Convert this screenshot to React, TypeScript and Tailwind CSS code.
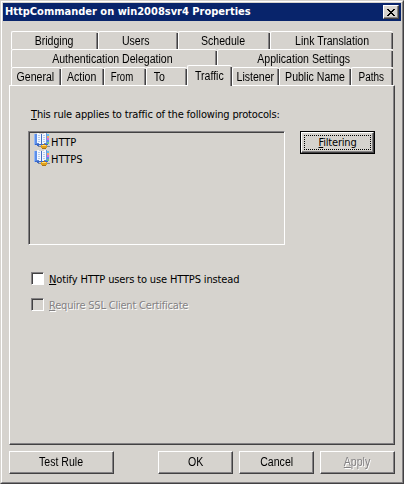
import React from "react";

const UI = "font-['DejaVu_Sans_Condensed','DejaVu_Sans',sans-serif] [font-stretch:condensed]";
const RAISED =
  "border border-t-white border-l-white border-r-[#424142] border-b-[#424142] shadow-[inset_-1px_-1px_0_#848284]";

function Tab({ label, box, text = "scale-x-[0.88]" }: { label: string; box: string; text?: string }) {
  return (
    <div
      className={`${box} relative flex h-[18px] shrink-0 justify-center rounded-t-[2px] border-t border-l border-white text-[12px] leading-[19px]`}
    >
      <span className={text}>{label}</span>
      <i className="absolute top-px right-0 bottom-0 w-[2px] border-r border-l border-r-[#424142] border-l-[#848284]" />
    </div>
  );
}

function Button({ children, box, text = "" }: { children: React.ReactNode; box: string; text?: string }) {
  return (
    <button className={`${box} ${RAISED} flex h-[23px] shrink-0 justify-center pt-[3px] text-[12px] leading-[15px]`}>
      <span className={`scale-x-[0.88] ${text}`}>{children}</span>
    </button>
  );
}

function ProtocolIcon() {
  return (
    <svg width="16" height="16" viewBox="0 0 16 16" shapeRendering="crispEdges" className="shrink-0">
      <path d="M0 1h3v11H0z" fill="#5b8eea" />
      <path d="M0 1h1v11H0z" fill="#94b8f5" />
      <path d="M1 11h13v1H1zM3 12h4v1H3z" fill="#3967c8" />
      <path d="M3 0h2v1h2v10H5v-1H3z" fill="#f2f7fe" />
      <path d="M8 1h2V0h2v10h-2v1H8z" fill="#f2f7fe" />
      <path d="M12 0h1v11h-1z" fill="#6b96df" />
      <path d="M7 1h1v11H7z" fill="#426fc2" />
      <path d="M2 10h3v1H2zM10 10h4v1h-4z" fill="#5a86d6" />
      <path d="M4 2h2v1H4zM4 4h2v1H4zM4 6h2v1H4zM4 8h2v1H4zM9 2h2v1H9zM9 4h2v1H9zM9 6h2v1H9zM9 8h2v1H9z" fill="#b5caea" />
      <path d="M13 1h2v2h-2z" fill="#5fc0ee" />
      <path d="M13 3h2v2h-2z" fill="#f5a469" />
      <path d="M13 5h2v2h-2z" fill="#d86be0" />
      <path d="M13 7h2v2h-2z" fill="#5a8cf0" />
      <path d="M13 9h2v2h-2z" fill="#63c78c" />
      <path d="M4 13h12v1H4z" fill="#848a94" />
      <path d="M5 12h2v1H5zM13 12h2v1h-2z" fill="#c5cad2" />
      <path d="M9 11h2v1H9z" fill="#b5790f" />
      <path d="M7 12h6v3H7z" fill="#e0a01c" />
      <path d="M8 12h4v1H8z" fill="#ffdc70" />
      <path d="M8 15h4v1H8z" fill="#a87416" />
    </svg>
  );
}

function CheckBox({ label, disabled = false, text }: { label: string; disabled?: boolean; text: string }) {
  return (
    <label className="flex h-[13px] items-center">
      <span
        className={`size-[13px] shrink-0 border border-t-[#848284] border-l-[#848284] border-r-white border-b-white shadow-[inset_1px_1px_0_#424142] ${disabled ? "" : "bg-white"}`}
      />
      <span
        className={`mt-[2px] ml-[5px] text-[11px] leading-[13px] ${text} ${disabled ? "text-[#848284] [text-shadow:1px_1px_0_#fff]" : ""}`}
      >
        <u className="underline-offset-1">{label[0]}</u>
        {label.slice(1)}
      </span>
    </label>
  );
}

export default function App() {
  return (
    <div className="h-[484px] w-[404px] overflow-hidden border border-t-[#d6d3ce] border-r-[#424142] border-b-[#424142] border-l-[#d6d3ce] bg-[#d6d3ce] font-['Liberation_Sans',Arial,sans-serif] whitespace-nowrap text-black">
      <div className="h-full border border-t-white border-r-[#848284] border-b-[#848284] border-l-white pt-px pl-px">
        <header className="flex h-[18px] w-[398px] items-center justify-between bg-[#08246b] pr-[2px] pl-[2px]">
          <h1 className={`${UI} text-[11px] leading-[18px] font-bold text-white`}>
            HttpCommander on win2008svr4 Properties
          </h1>
          <button aria-label="Close" className={`${RAISED} flex h-[14px] w-[16px] items-center justify-center bg-[#d6d3ce]`}>
            <svg width="8" height="7" viewBox="0 0 8 7" shapeRendering="crispEdges">
              <path d="M0 0h2v1h1v1h2V1h1V0h2v1H7v1H6v1H5v1h1v1h1v1h1v1H6V6H5V5H3v1H2v1H0V6h1V5h1V4h1V3H2V2H1V1H0z" />
            </svg>
          </button>
        </header>

        <nav className="mt-[10px] ml-[8px] w-[382px]">
          <div className="flex">
            <Tab label="Bridging" box="w-[87px] pr-[2px]" />
            <Tab label="Users" box="w-[80px] pr-[6px]" />
            <Tab label="Schedule" box="w-[92px] pr-[2px]" />
            <Tab label="Link Translation" box="w-[123px]" />
          </div>
          <div className="flex">
            <Tab label="Authentication Delegation" box="w-[206px] pr-[4px]" />
            <Tab label="Application Settings" box="w-[176px] pr-[3px]" />
          </div>
          <div className="flex">
            <Tab label="General" box="w-[50px] pr-[2px]" />
            <Tab label="Action" box="w-[43px] pr-[3px]" />
            <Tab label="From" box="w-[42px] pr-[7px]" text="scale-x-[0.8]" />
            <Tab label="To" box="w-[41px] pr-[16px]" />
            <Tab label="Traffic" box="w-[45px] z-10 -mt-[2px] h-[21px]! pt-[1px] pr-[2px] bg-[#d6d3ce]" />
            <Tab label="Listener" box="w-[47px] pr-[2px]" />
            <Tab label="Public Name" box="w-[72px]" />
            <Tab label="Paths" box="w-[42px] pr-[3px]" text="scale-x-[0.83]" />
          </div>
        </nav>

        <main className={`${RAISED} ${UI} -mt-px ml-[6px] h-[360px] w-[386px] pt-[21px] pl-[18px] text-[11px]`}>
          <p className="ml-[3px] h-[14px] leading-[15px] tracking-[-0.17px]">
            <u className="underline-offset-1">T</u>his rule applies to traffic of the following protocols:
          </p>
          <div className="mt-[10px] flex items-start gap-[15px]">
            <ul className="h-[114px] w-[257px] border border-t-[#848284] border-r-white border-b-white border-l-[#848284] pt-px pl-[5px] shadow-[inset_1px_1px_0_#424142]">
              {["HTTP", "HTTPS"].map((name) => (
                <li key={name} className="flex h-[17px] items-start gap-px leading-[17px]">
                  <ProtocolIcon />
                  <span className="mt-px">{name}</span>
                </li>
              ))}
            </ul>
            <button className="h-[23px] w-[75px] border border-black">
              <span className={`${RAISED} flex h-full p-[2px]`}>
                <span className="flex h-full w-full items-center justify-center border border-dotted border-black leading-[13px]">
                  <span className="tracking-[-0.2px]">
                    <u className="underline-offset-1">F</u>iltering
                  </span>
                </span>
              </span>
            </button>
          </div>
          <div className="mt-[27px] ml-[3px] flex flex-col gap-[13px]">
            <CheckBox label="Notify HTTP users to use HTTPS instead" text="tracking-[-0.14px]" />
            <CheckBox label="Require SSL Client Certificate" disabled text="tracking-[-0.2px]" />
          </div>
        </main>

        <footer className="mt-[6px] ml-[6px] flex w-[386px] gap-[6px]">
          <Button box="w-[105px] mr-[38px]">Test Rule</Button>
          <Button box="w-[75px]">OK</Button>
          <Button box="w-[75px]">Cancel</Button>
          <Button box="w-[75px]" text="text-[#848284] [text-shadow:1px_1px_0_#fff]">
            <u className="underline-offset-1">A</u>pply
          </Button>
        </footer>
      </div>
    </div>
  );
}
